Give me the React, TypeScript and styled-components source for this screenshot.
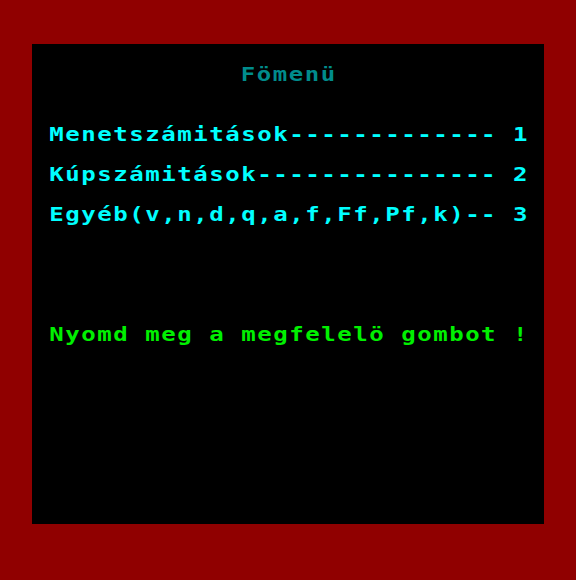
import styled, { createGlobalStyle } from 'styled-components'

const GlobalStyle = createGlobalStyle`
  html, body {
    margin: 0;
    padding: 0;
    background-color: #900000;
  }
`

const Page = styled.div`
  width: 576px;
  height: 580px;
  padding: 44px 32px 0;
  box-sizing: border-box;
  background-color: #900000;
`

const Screen = styled.div`
  width: 512px;
  height: 480px;
  padding: 20px 16px 0;
  box-sizing: border-box;
  background-color: #000;
`

// 30 columns of 16px: glyphs are drawn at 13.33px and widened 1.2x
const Text = styled.div`
  width: 400px;
  display: flex;
  flex-direction: column;
  transform: scaleX(1.2);
  transform-origin: left top;
  font-family: 'DejaVu Sans Mono', 'Liberation Mono', monospace;
  font-weight: bold;
  font-size: 20px;
  line-height: 20px;
  letter-spacing: 1.29px;
  white-space: pre;
`

const Title = styled.div`
  color: #008c8c;
  text-align: center;
  padding-left: 1.3px;
`

const Menu = styled.div`
  margin-top: 40px;
  display: flex;
  flex-direction: column;
  gap: 20px;
`

const Line = styled.div<{ $color?: string }>`
  color: ${(p) => p.$color || '#00ffff'};
  padding-left: 1px;
`

const Prompt = styled(Line)`
  margin-top: 100px;
`

const items = [
  'Menetszámitások------------- 1',
  'Kúpszámitások--------------- 2',
  'Egyéb(v,n,d,q,a,f,Ff,Pf,k)-- 3',
]

const App = () => {
  return (
    <>
      <GlobalStyle />
      <Page>
        <Screen>
          <Text>
            <Title>Fömenü</Title>
            <Menu>
              {items.map((item) => (
                <Line key={item}>{item}</Line>
              ))}
            </Menu>
            <Prompt $color="#00f000">Nyomd meg a megfelelö gombot !</Prompt>
          </Text>
        </Screen>
      </Page>
    </>
  )
}

export default App
